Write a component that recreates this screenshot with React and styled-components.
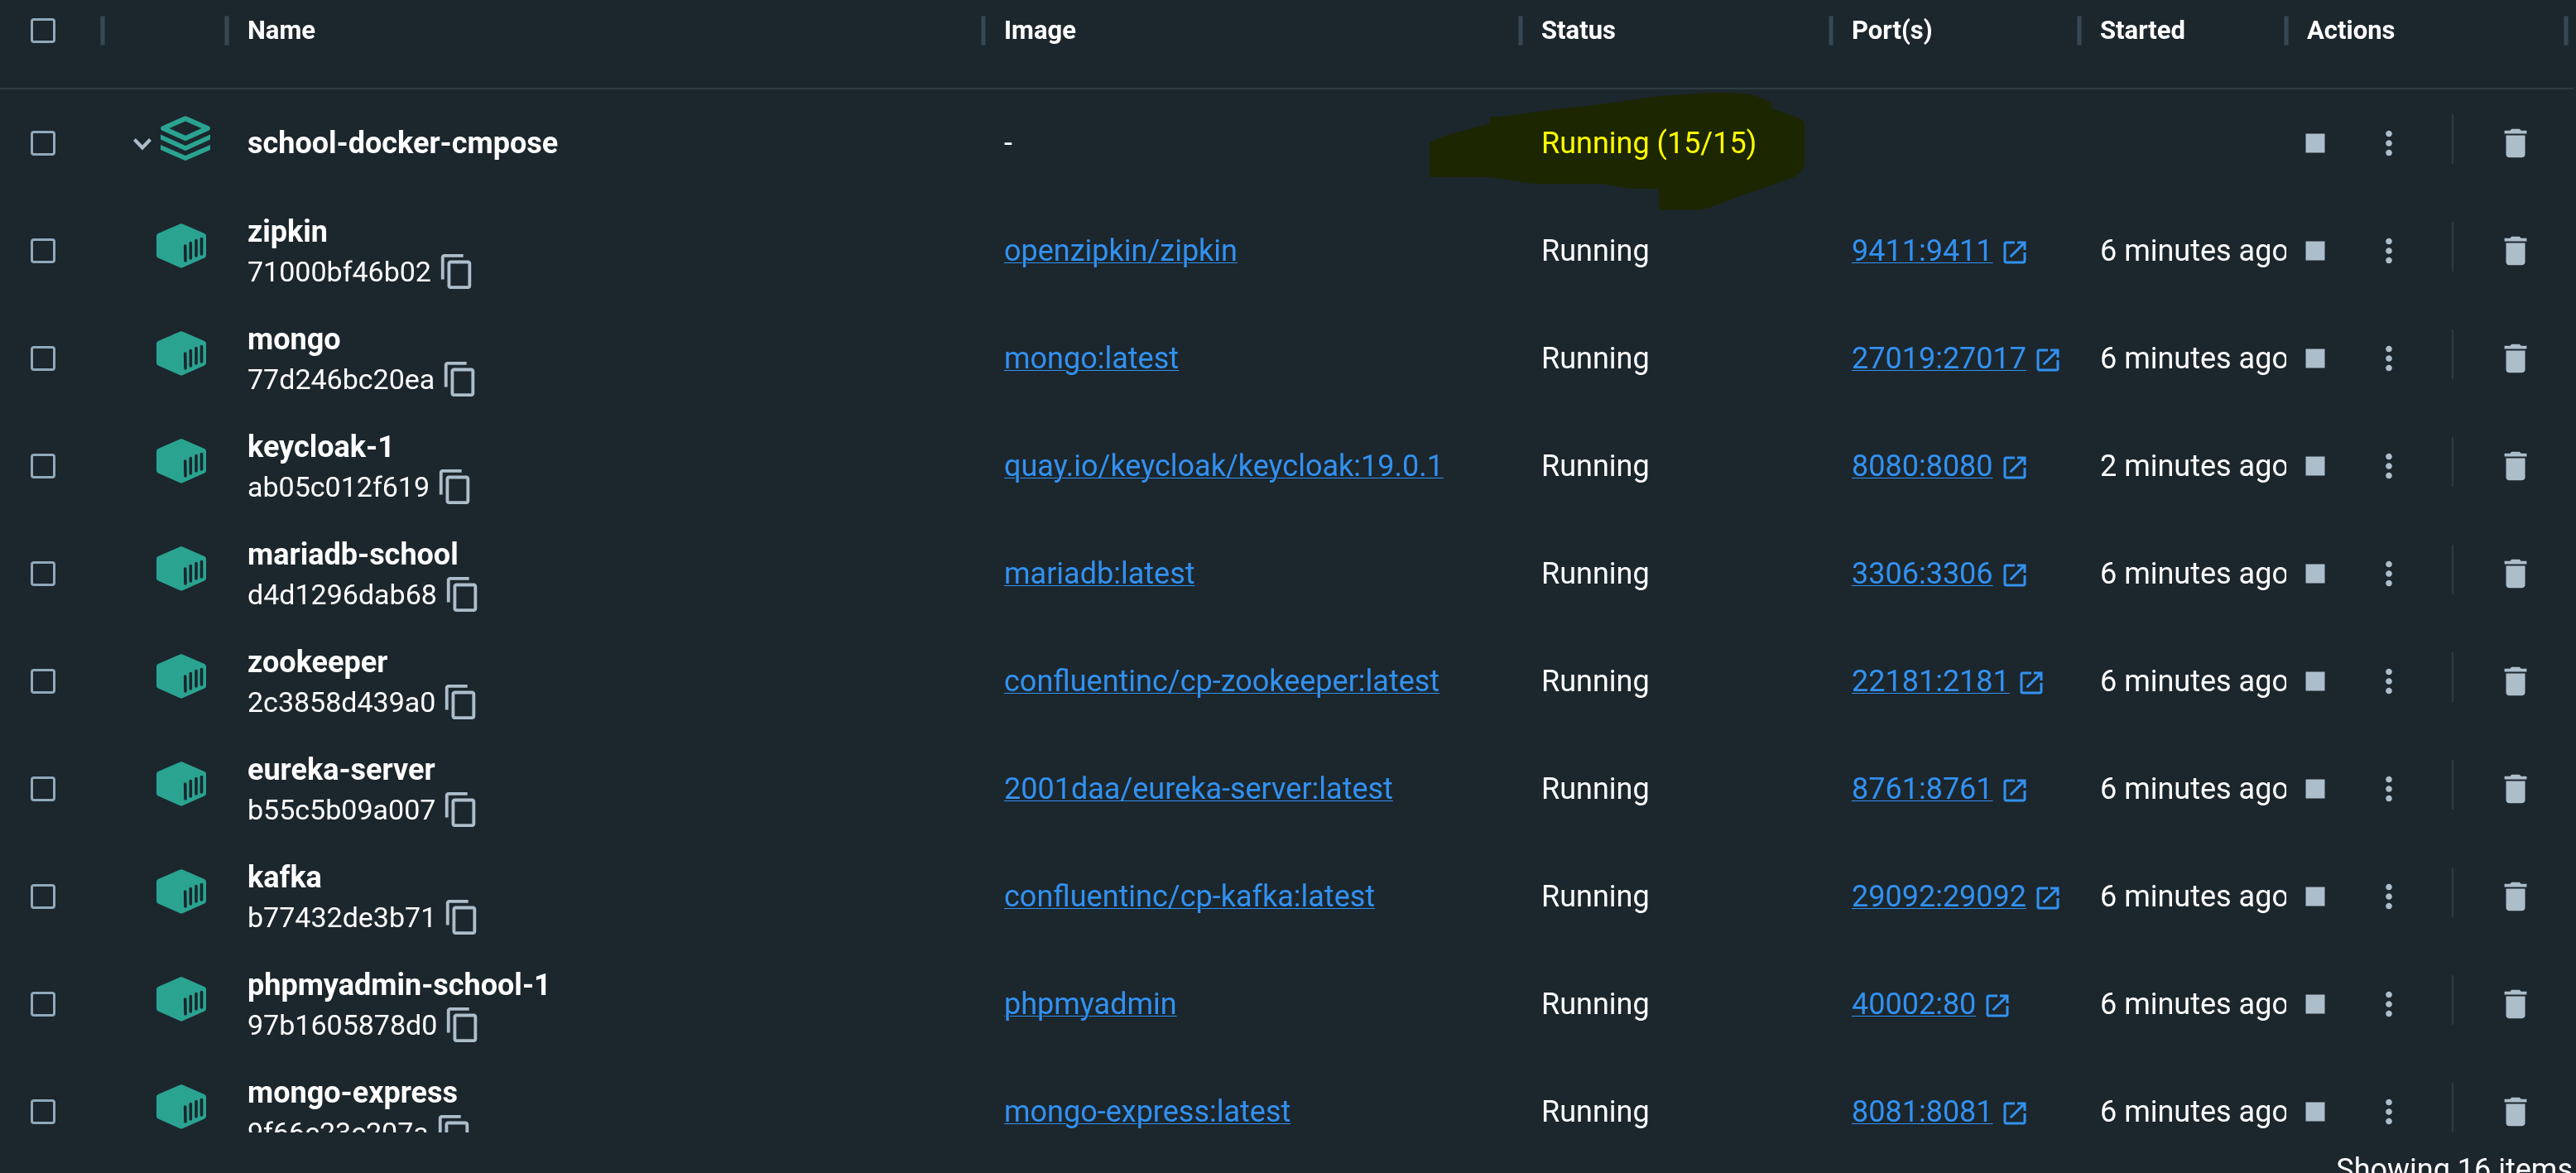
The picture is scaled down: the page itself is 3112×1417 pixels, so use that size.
import React from "react";
import styled, { createGlobalStyle } from "styled-components";

const Global = createGlobalStyle`
  *, *::before, *::after { box-sizing: border-box; }
  body { margin: 0; background: #1c262d; }
`;

const Page = styled.main`
  display: flex;
  flex-direction: column;
  height: 100vh;
  overflow: hidden;
  background: #1c262d;
  color: #ffffff;
  font-family: Roboto, "Noto Sans", sans-serif;
  font-size: 36px;
  line-height: 50px;
`;

const Viewport = styled.div`
  flex: 1;
  min-height: 0;
  overflow: hidden;
  padding-right: 3px;
`;

const Table = styled.table`
  display: block;
`;

const Head = styled.thead`
  display: block;
  height: 108px;
  border-bottom: 2px solid #2f3a42;
`;

const Body = styled.tbody`
  display: block;
`;

const Row = styled.tr`
  display: grid;
  grid-template-columns: 124px 150px 914fr 649fr 375px 300px 250px 338px;
  padding-right: 9px;
`;

const HeadCell = styled.th`
  display: flex;
  align-items: center;
  height: 74px;
  padding: 0 0 0 ${(p) => p.$inset || 25}px;
  font-size: 31px;
  font-weight: 700;
  text-align: left;

  &::after {
    content: "";
    width: 6px;
    height: 36px;
    margin-left: auto;
    margin-right: -3px;
    border: 1px solid #2b3942;
    background: #364854;
  }
`;

const Cell = styled.td`
  display: flex;
  align-items: center;
  height: 130px;
  padding: 0 0 0 ${(p) => (p.$inset === undefined ? 25 : p.$inset)}px;
  white-space: nowrap;
  overflow: ${(p) => (p.$clip ? "hidden" : "visible")};
`;

const StatusCell = styled(Cell)`
  position: relative;
`;

const KindCell = styled(Cell)`
  align-items: flex-start;
  justify-content: flex-end;
  gap: 10px;
  padding: 32px ${(p) => (p.$group ? 20 : 25)}px 0 0;
`;

const Checkbox = styled.input`
  appearance: none;
  width: 30px;
  height: 30px;
  margin: 0;
  border: 3px solid #8fa9bb;
  border-radius: 4px;
  background: transparent;
`;

const IconButton = styled.button`
  display: flex;
  flex: none;
  margin: 0;
  padding: 0;
  border: 0;
  background: none;
  color: #adbecb;

  svg {
    width: 46px;
    height: 46px;
    fill: currentColor;
  }
`;

const ChevronButton = styled(IconButton)`
  padding-top: 26px;

  svg {
    width: 24px;
    height: 16px;
    fill: none;
    stroke: currentColor;
    stroke-width: 4;
  }
`;

const KindIcon = styled.svg`
  flex: none;
  width: 60px;
  height: 54px;
  color: #2aa391;
`;

const NameStack = styled.div`
  display: flex;
  flex-direction: column;
  padding-top: 4px;
`;

const Name = styled.span`
  font-weight: 700;
  line-height: 46px;
`;

const IdLine = styled.div`
  display: flex;
  align-items: center;
  gap: 8px;
  height: 50px;
  font-size: 34px;
`;

const Link = styled.a`
  color: #3291f0;
  text-decoration: underline;
  text-decoration-thickness: 1px;
  text-underline-offset: 2px;
`;

const PortLink = styled(Link)`
  display: flex;
  align-items: center;
  gap: 8px;
  text-decoration: none;

  span {
    text-decoration: underline;
    text-decoration-thickness: 1px;
  }

  svg {
    width: 36px;
    height: 36px;
    margin-top: 4px;
    fill: currentColor;
  }
`;

const Actions = styled.div`
  display: flex;
  align-items: center;
  gap: 43px;
`;

const ActionDivider = styled.span`
  width: 2px;
  height: 60px;
  margin: 0 9px 10px 10px;
  background: #2f3a42;
`;

const Highlight = styled.svg`
  position: absolute;
  top: 4px;
  left: -110px;
  width: 453px;
  height: 142px;
  fill: #ffff00;
  mix-blend-mode: multiply;
  pointer-events: none;
`;

const Footer = styled.footer`
  flex: none;
  height: 49px;
  padding: 20px 4px 0;
  text-align: right;
`;

const containers = [
  ["zipkin", "71000bf46b02", "openzipkin/zipkin", "9411:9411", "6 minutes ago"],
  ["mongo", "77d246bc20ea", "mongo:latest", "27019:27017", "6 minutes ago"],
  ["keycloak-1", "ab05c012f619", "quay.io/keycloak/keycloak:19.0.1", "8080:8080", "2 minutes ago"],
  ["mariadb-school", "d4d1296dab68", "mariadb:latest", "3306:3306", "6 minutes ago"],
  ["zookeeper", "2c3858d439a0", "confluentinc/cp-zookeeper:latest", "22181:2181", "6 minutes ago"],
  ["eureka-server", "b55c5b09a007", "2001daa/eureka-server:latest", "8761:8761", "6 minutes ago"],
  ["kafka", "b77432de3b71", "confluentinc/cp-kafka:latest", "29092:29092", "6 minutes ago"],
  ["phpmyadmin-school-1", "97b1605878d0", "phpmyadmin", "40002:80", "6 minutes ago"],
  ["mongo-express", "9f66c23c207a", "mongo-express:latest", "8081:8081", "6 minutes ago"],
];

const headings = ["Name", "Image", "Status", "Port(s)", "Started", "Actions"];

const StackIcon = () => (
  <KindIcon viewBox="0 0 60 54" aria-hidden="true">
    <path
      fill="currentColor"
      fillRule="evenodd"
      d="M28 .8Q30-.4 32 .8L58.500 12.500Q61.500 15 58.500 17.500L32 29.500Q30 30.500 28 29.500L1.500 17.500Q-1.500 15 1.500 12.500ZM30 6.500L10.500 15L30 23.800L49.500 15Z"
    />
    <path fill="currentColor" d="M0 22.500L30 36L60 22.500V28.500L32 41.300Q30 42.500 28 41.300L0 28.500Z" />
    <path fill="currentColor" d="M0 35L30 48L60 35V41L32 53.300Q30 54.500 28 53.300L0 41Z" />
  </KindIcon>
);

const CubeIcon = () => (
  <KindIcon viewBox="0 0 60 54" aria-hidden="true">
    <path
      fill="currentColor"
      d="M28.500 .5Q30 0 31.500 .5L58 12Q60 13 60 15V38.500Q60 40.500 58 41.500L31.500 53.200Q30 54 28.500 53.200L2 41.500Q0 40.500 0 38.500V15Q0 13 2 12Z"
    />
    <path d="M34.700 27L35 45M41.300 23.500V42M48 20.500V39M54.500 18.500V37" stroke="#1c262d" strokeWidth="3.600" strokeLinecap="round" />
  </KindIcon>
);

const RowActions = ({ name }) => (
  <Actions>
    <IconButton type="button" aria-label={`Stop ${name}`}>
      <svg viewBox="0 0 24 24"><path d="M6 6h12v12H6z" /></svg>
    </IconButton>
    <IconButton type="button" aria-label={`More actions for ${name}`}>
      <svg viewBox="0 0 24 24">
        <path d="M12 8c1.100 0 2-.9 2-2s-.9-2-2-2-2 .9-2 2 .9 2 2 2zm0 2c-1.100 0-2 .9-2 2s.9 2 2 2 2-.9 2-2-.9-2-2-2zm0 6c-1.100 0-2 .9-2 2s.9 2 2 2 2-.9 2-2-.9-2-2-2z" />
      </svg>
    </IconButton>
    <ActionDivider />
    <IconButton type="button" aria-label={`Delete ${name}`}>
      <svg viewBox="0 0 24 24">
        <path d="M6 19c0 1.100.9 2 2 2h8c1.100 0 2-.9 2-2V7H6v12zM19 4h-3.500l-1-1h-5l-1 1H5v2h14V4z" />
      </svg>
    </IconButton>
  </Actions>
);

export default function App() {
  return (
    <Page>
      <Global />
      <Viewport>
        <Table>
          <Head>
            <Row>
              <HeadCell $inset={37}>
                <Checkbox type="checkbox" aria-label="Select all" />
              </HeadCell>
              <HeadCell aria-label="Kind" />
              {headings.map((h) => (
                <HeadCell key={h}>{h}</HeadCell>
              ))}
            </Row>
          </Head>
          <Body>
            <Row>
              <Cell $inset={37}>
                <Checkbox type="checkbox" aria-label="Select school-docker-cmpose" />
              </Cell>
              <KindCell $group>
                <ChevronButton type="button" aria-label="Collapse group">
                  <svg viewBox="0 0 24 16"><path d="M2.500 2.500L12 12.500L21.500 2.500" /></svg>
                </ChevronButton>
                <StackIcon />
              </KindCell>
              <Cell><Name>school-docker-cmpose</Name></Cell>
              <Cell>-</Cell>
              <StatusCell>
                Running (15/15)
                <Highlight viewBox="0 0 453 142" aria-hidden="true">
                  <path d="M0 60L22 51L73 37V29H85L152 20L214 13L277 4L335 0H368L388 2L408 9Q413 11 413 14V19L433 26L447 31Q453 34 453 38V86Q452 96 440 102L404 115L375 125L348 135Q332 142 321 142H277V116H243L210 110H129L116 109L94 105L69 102H0Z" />
                </Highlight>
              </StatusCell>
              <Cell />
              <Cell />
              <Cell $inset={12}><RowActions name="school-docker-cmpose" /></Cell>
            </Row>
            {containers.map(([name, id, image, port, started]) => (
              <Row key={id}>
                <Cell $inset={37}>
                  <Checkbox type="checkbox" aria-label={`Select ${name}`} />
                </Cell>
                <KindCell><CubeIcon /></KindCell>
                <Cell>
                  <NameStack>
                    <Name>{name}</Name>
                    <IdLine>
                      {id}
                      <IconButton type="button" aria-label={`Copy ID of ${name}`}>
                        <svg viewBox="0 0 24 24">
                          <path d="M16 1H4c-1.100 0-2 .9-2 2v14h2V3h12V1zm3 4H8c-1.100 0-2 .9-2 2v14c0 1.100.9 2 2 2h11c1.100 0 2-.9 2-2V7c0-1.100-.9-2-2-2zm0 16H8V7h11v14z" />
                        </svg>
                      </IconButton>
                    </IdLine>
                  </NameStack>
                </Cell>
                <Cell><Link href="#image">{image}</Link></Cell>
                <Cell>Running</Cell>
                <Cell>
                  <PortLink href="#port">
                    <span>{port}</span>
                    <svg viewBox="0 0 24 24" aria-hidden="true">
                      <path d="M19 19H5V5h7V3H5c-1.110 0-2 .9-2 2v14c0 1.100.89 2 2 2h14c1.100 0 2-.9 2-2v-7h-2v7zM14 3v2h3.590l-9.830 9.830 1.410 1.410L19 6.410V10h2V3h-7z" />
                    </svg>
                  </PortLink>
                </Cell>
                <Cell $clip>{started}</Cell>
                <Cell $inset={12}><RowActions name={name} /></Cell>
              </Row>
            ))}
          </Body>
        </Table>
      </Viewport>
      <Footer>Showing 16 items</Footer>
    </Page>
  );
}
